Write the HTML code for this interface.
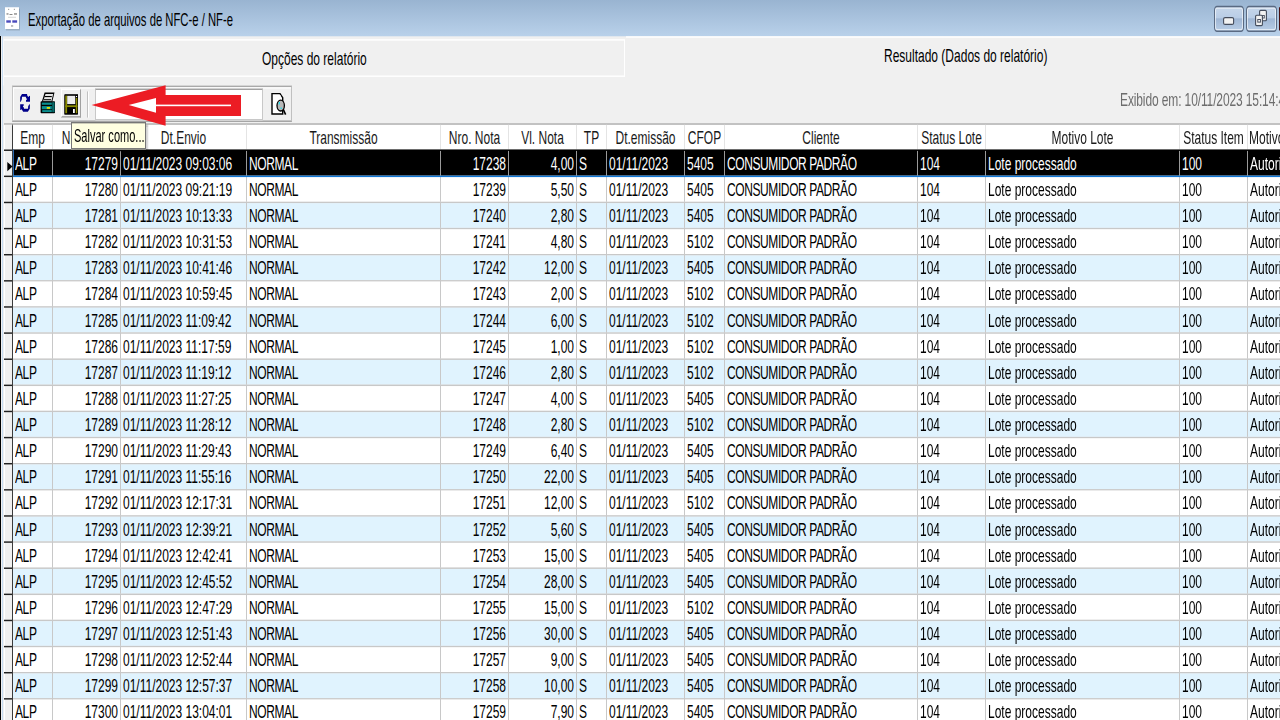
<!DOCTYPE html><html><head><meta charset="utf-8"><style>
html,body{margin:0;padding:0;width:1280px;height:720px;overflow:hidden;background:#f0f0f0}
#root{position:absolute;left:0;top:0;width:1280px;height:496.077px;transform:scaleY(1.451389);transform-origin:0 0;font-family:"Liberation Sans",sans-serif;font-size:12px;color:#000;background:#f0f0f0}
.a{position:absolute}
.t{position:absolute;white-space:pre;line-height:14px;height:14px;transform:scaleY(1.08);transform-origin:0 11.16px}
.u{letter-spacing:-0.4px}
.c{position:absolute;white-space:pre;line-height:14px;height:14px;overflow:hidden;transform:scaleY(1.08);transform-origin:0 11.16px}
</style></head><body><div id="root">

<div class="a" style="left:0;top:0;width:1280px;height:25.08px;background:linear-gradient(#99b4d1,#b9d1ea)"></div>
<div class="a" style="left:5px;top:4.82px;width:14px;height:15.16px;background:#fff;box-shadow:1px 1px 0 rgba(0,0,0,0.15)"></div>
<div class="t" style="left:28px;top:6.75px;font-size:12px;color:#000;transform:scaleX(0.94) scaleY(1.07);transform-origin:0 11.16px">Exportação de arquivos de NFC-e / NF-e</div>
<div class="a" style="left:0;top:24.94px;width:1px;height:600px;background:#000"></div>
<div class="a" style="left:2px;top:24.94px;width:1px;height:600px;background:#c6dcf2"></div>
<div class="a" style="left:3px;top:27.22px;width:1px;height:31.35px;background:#fafafa"></div>
<div class="a" style="left:4px;top:27.22px;width:620px;height:1px;background:#fff"></div>
<div class="a" style="left:624px;top:27.22px;width:1px;height:25.49px;background:#fff"></div>
<div class="a" style="left:4px;top:52.23px;width:621px;height:1px;background:#fff"></div>
<div class="a" style="left:626px;top:25.22px;width:654px;height:1px;background:#fff"></div>
<div class="t" style="left:262px;top:33.56px">Opções do relatório</div>
<div class="t" style="left:884px;top:32.04px">Resultado (Dados do relatório)</div>
<div class="t" style="left:1120px;top:61.87px;color:#6d6d6d;letter-spacing:-0.12px">Exibido em: 10/11/2023 15:14:48</div>
<div class="a" style="left:12px;top:59.25px;width:280px;height:24.46px;border-top:1px solid #a9a9a9;border-left:1px solid #c8c8c8;border-right:1px solid #c0c0c0;border-bottom:1px solid #a0a0a0;box-sizing:border-box;box-shadow:inset 1px 1px 0 #fff"></div>
<div class="a" style="left:61px;top:61.32px;width:20px;height:19.98px;border-top:1px solid #fff;border-left:1px solid #fff;border-right:1px solid #a0a0a0;border-bottom:1px solid #a0a0a0;box-sizing:border-box"></div>
<svg class="a" style="left:64px;top:64.77px" width="14" height="14.47" viewBox="0 0 14 14" preserveAspectRatio="none"><rect x="0.5" y="0.5" width="13" height="13" fill="#000"/><rect x="1.5" y="1.5" width="11" height="11" fill="#8a8a00"/><rect x="3" y="1.5" width="8" height="5.5" fill="#e8e8e8"/><rect x="3" y="8.5" width="8" height="4" fill="#000"/><rect x="8.5" y="9" width="1.5" height="3" fill="#fff"/></svg>
<div class="a" style="left:87px;top:62.70px;width:1px;height:17.91px;background:#c0c0c0;box-shadow:1px 0 0 #fff"></div>
<div class="a" style="left:95px;top:61.32px;width:168px;height:22.05px;background:#fff;border:1px solid #c8c8c8;border-top-color:#a0a0a0;box-sizing:border-box"></div>
<svg class="a" style="left:0;top:0;z-index:3" width="1280" height="496.08"><polygon points="91.60,72.34 165.60,58.77 165.60,65.45 241.00,65.45 241.00,79.92 165.60,79.92 165.60,86.61" fill="#ec1c24"/><polygon points="128.70,72.34 156.00,67.45 156.00,77.72" fill="#fff"/><rect x="156" y="72.07" width="75" height="1.10" fill="#fff"/></svg>
<div class="a" style="left:4px;top:85.00px;width:1276px;height:1px;background:#a8a8a8"></div>
<div class="a" style="left:4px;top:86px;width:8px;height:420px;background:#f0f0f0;box-shadow:inset 1px 0 0 #fff"></div>
<div class="a" style="left:12px;top:86px;width:1px;height:420px;background:#3c3c3c"></div>
<div class="a" style="left:13px;top:86px;width:1267px;height:17px;background:#fff"></div>
<div class="a" style="left:52px;top:86px;width:1px;height:17px;background:#e4e4e4"></div>
<div class="a" style="left:120px;top:86px;width:1px;height:17px;background:#e4e4e4"></div>
<div class="a" style="left:246px;top:86px;width:1px;height:17px;background:#e4e4e4"></div>
<div class="a" style="left:440px;top:86px;width:1px;height:17px;background:#e4e4e4"></div>
<div class="a" style="left:508px;top:86px;width:1px;height:17px;background:#e4e4e4"></div>
<div class="a" style="left:576px;top:86px;width:1px;height:17px;background:#e4e4e4"></div>
<div class="a" style="left:606px;top:86px;width:1px;height:17px;background:#e4e4e4"></div>
<div class="a" style="left:684px;top:86px;width:1px;height:17px;background:#e4e4e4"></div>
<div class="a" style="left:724px;top:86px;width:1px;height:17px;background:#e4e4e4"></div>
<div class="a" style="left:917px;top:86px;width:1px;height:17px;background:#e4e4e4"></div>
<div class="a" style="left:985px;top:86px;width:1px;height:17px;background:#e4e4e4"></div>
<div class="a" style="left:1179px;top:86px;width:1px;height:17px;background:#e4e4e4"></div>
<div class="a" style="left:1247px;top:86px;width:1px;height:17px;background:#e4e4e4"></div>
<div class="c" style="left:13px;top:87.64px;width:39px;text-align:center;color:#1a1a1a">Emp</div>
<div class="c" style="left:53px;top:87.64px;width:67px;text-align:center;color:#1a1a1a">Nro. Lote</div>
<div class="c" style="left:121px;top:87.64px;width:125px;text-align:center;color:#1a1a1a">Dt.Envio</div>
<div class="c" style="left:247px;top:87.64px;width:193px;text-align:center;color:#1a1a1a">Transmissão</div>
<div class="c" style="left:441px;top:87.64px;width:67px;text-align:center;color:#1a1a1a">Nro. Nota</div>
<div class="c" style="left:509px;top:87.64px;width:67px;text-align:center;color:#1a1a1a">Vl. Nota</div>
<div class="c" style="left:577px;top:87.64px;width:29px;text-align:center;color:#1a1a1a">TP</div>
<div class="c" style="left:607px;top:87.64px;width:77px;text-align:center;color:#1a1a1a">Dt.emissão</div>
<div class="c" style="left:685px;top:87.64px;width:39px;text-align:center;color:#1a1a1a">CFOP</div>
<div class="c" style="left:725px;top:87.64px;width:192px;text-align:center;color:#1a1a1a">Cliente</div>
<div class="c" style="left:918px;top:87.64px;width:67px;text-align:center;color:#1a1a1a">Status Lote</div>
<div class="c" style="left:986px;top:87.64px;width:193px;text-align:center;color:#1a1a1a">Motivo Lote</div>
<div class="c" style="left:1180px;top:87.64px;width:67px;text-align:center;color:#1a1a1a">Status Item</div>
<div class="c" style="left:1249px;top:87.64px;width:200px;color:#1a1a1a">Motivo Item</div>
<div class="a" style="left:13px;top:103px;width:1267px;height:1px;background:#c8c8c8"></div>
<div class="a" style="left:13px;top:104px;width:1267px;height:17px;background:#000"></div>
<div class="a" style="left:4px;top:103px;width:8px;height:1px;background:#202020"></div>
<div class="a" style="left:13px;top:103px;width:1267px;height:18px;background:#000"></div>
<div class="a" style="left:13px;top:121px;width:1267px;height:1px;background:#1076d4;z-index:2"></div>
<div class="a" style="left:13px;top:103px;width:1px;height:18px;background:#2a6ab0"></div>
<div class="a" style="left:52px;top:104px;width:1px;height:17px;background:#9a9a9a"></div>
<div class="a" style="left:120px;top:104px;width:1px;height:17px;background:#9a9a9a"></div>
<div class="a" style="left:246px;top:104px;width:1px;height:17px;background:#9a9a9a"></div>
<div class="a" style="left:440px;top:104px;width:1px;height:17px;background:#9a9a9a"></div>
<div class="a" style="left:508px;top:104px;width:1px;height:17px;background:#9a9a9a"></div>
<div class="a" style="left:576px;top:104px;width:1px;height:17px;background:#9a9a9a"></div>
<div class="a" style="left:606px;top:104px;width:1px;height:17px;background:#9a9a9a"></div>
<div class="a" style="left:684px;top:104px;width:1px;height:17px;background:#9a9a9a"></div>
<div class="a" style="left:724px;top:104px;width:1px;height:17px;background:#9a9a9a"></div>
<div class="a" style="left:917px;top:104px;width:1px;height:17px;background:#9a9a9a"></div>
<div class="a" style="left:985px;top:104px;width:1px;height:17px;background:#9a9a9a"></div>
<div class="a" style="left:1179px;top:104px;width:1px;height:17px;background:#9a9a9a"></div>
<div class="a" style="left:1247px;top:104px;width:1px;height:17px;background:#9a9a9a"></div>
<div class="c" style="left:15px;top:105.84px;width:37px;color:#fff;letter-spacing:-0.4px">ALP</div>
<div class="c" style="left:53px;top:105.84px;width:65px;text-align:right;color:#fff">17279</div>
<div class="c" style="left:123px;top:105.84px;width:123px;color:#fff">01/11/2023 09:03:06</div>
<div class="c" style="left:249px;top:105.84px;width:191px;color:#fff;letter-spacing:-0.4px">NORMAL</div>
<div class="c" style="left:441px;top:105.84px;width:65px;text-align:right;color:#fff">17238</div>
<div class="c" style="left:509px;top:105.84px;width:65px;text-align:right;color:#fff">4,00</div>
<div class="c" style="left:579px;top:105.84px;width:27px;color:#fff">S</div>
<div class="c" style="left:609px;top:105.84px;width:75px;color:#fff">01/11/2023</div>
<div class="c" style="left:687px;top:105.84px;width:37px;color:#fff">5405</div>
<div class="c" style="left:727px;top:105.84px;width:190px;color:#fff;letter-spacing:-0.4px">CONSUMIDOR PADRÃO</div>
<div class="c" style="left:920px;top:105.84px;width:65px;color:#fff">104</div>
<div class="c" style="left:988px;top:105.84px;width:191px;color:#fff">Lote processado</div>
<div class="c" style="left:1182px;top:105.84px;width:65px;color:#fff">100</div>
<div class="c" style="left:1250px;top:105.84px;width:150px;color:#fff">Autorizado o uso da NF-e</div>
<div class="a" style="left:13px;top:121px;width:1267px;height:1px;background:#c8c8c8"></div>
<div class="a" style="left:13px;top:122px;width:1267px;height:17px;background:#fff"></div>
<div class="a" style="left:4px;top:121px;width:8px;height:1px;background:#202020"></div>
<div class="a" style="left:52px;top:121px;width:1px;height:18px;background:#c8c8c8"></div>
<div class="a" style="left:120px;top:121px;width:1px;height:18px;background:#c8c8c8"></div>
<div class="a" style="left:246px;top:121px;width:1px;height:18px;background:#c8c8c8"></div>
<div class="a" style="left:440px;top:121px;width:1px;height:18px;background:#c8c8c8"></div>
<div class="a" style="left:508px;top:121px;width:1px;height:18px;background:#c8c8c8"></div>
<div class="a" style="left:576px;top:121px;width:1px;height:18px;background:#c8c8c8"></div>
<div class="a" style="left:606px;top:121px;width:1px;height:18px;background:#c8c8c8"></div>
<div class="a" style="left:684px;top:121px;width:1px;height:18px;background:#c8c8c8"></div>
<div class="a" style="left:724px;top:121px;width:1px;height:18px;background:#c8c8c8"></div>
<div class="a" style="left:917px;top:121px;width:1px;height:18px;background:#c8c8c8"></div>
<div class="a" style="left:985px;top:121px;width:1px;height:18px;background:#c8c8c8"></div>
<div class="a" style="left:1179px;top:121px;width:1px;height:18px;background:#c8c8c8"></div>
<div class="a" style="left:1247px;top:121px;width:1px;height:18px;background:#c8c8c8"></div>
<div class="c" style="left:15px;top:123.84px;width:37px;color:#000;letter-spacing:-0.4px">ALP</div>
<div class="c" style="left:53px;top:123.84px;width:65px;text-align:right;color:#000">17280</div>
<div class="c" style="left:123px;top:123.84px;width:123px;color:#000">01/11/2023 09:21:19</div>
<div class="c" style="left:249px;top:123.84px;width:191px;color:#000;letter-spacing:-0.4px">NORMAL</div>
<div class="c" style="left:441px;top:123.84px;width:65px;text-align:right;color:#000">17239</div>
<div class="c" style="left:509px;top:123.84px;width:65px;text-align:right;color:#000">5,50</div>
<div class="c" style="left:579px;top:123.84px;width:27px;color:#000">S</div>
<div class="c" style="left:609px;top:123.84px;width:75px;color:#000">01/11/2023</div>
<div class="c" style="left:687px;top:123.84px;width:37px;color:#000">5405</div>
<div class="c" style="left:727px;top:123.84px;width:190px;color:#000;letter-spacing:-0.4px">CONSUMIDOR PADRÃO</div>
<div class="c" style="left:920px;top:123.84px;width:65px;color:#000">104</div>
<div class="c" style="left:988px;top:123.84px;width:191px;color:#000">Lote processado</div>
<div class="c" style="left:1182px;top:123.84px;width:65px;color:#000">100</div>
<div class="c" style="left:1250px;top:123.84px;width:150px;color:#000">Autorizado o uso da NF-e</div>
<div class="a" style="left:13px;top:139px;width:1267px;height:1px;background:#c8c8c8"></div>
<div class="a" style="left:13px;top:140px;width:1267px;height:17px;background:#e0f3fe"></div>
<div class="a" style="left:4px;top:139px;width:8px;height:1px;background:#202020"></div>
<div class="a" style="left:52px;top:139px;width:1px;height:18px;background:#c8c8c8"></div>
<div class="a" style="left:120px;top:139px;width:1px;height:18px;background:#c8c8c8"></div>
<div class="a" style="left:246px;top:139px;width:1px;height:18px;background:#c8c8c8"></div>
<div class="a" style="left:440px;top:139px;width:1px;height:18px;background:#c8c8c8"></div>
<div class="a" style="left:508px;top:139px;width:1px;height:18px;background:#c8c8c8"></div>
<div class="a" style="left:576px;top:139px;width:1px;height:18px;background:#c8c8c8"></div>
<div class="a" style="left:606px;top:139px;width:1px;height:18px;background:#c8c8c8"></div>
<div class="a" style="left:684px;top:139px;width:1px;height:18px;background:#c8c8c8"></div>
<div class="a" style="left:724px;top:139px;width:1px;height:18px;background:#c8c8c8"></div>
<div class="a" style="left:917px;top:139px;width:1px;height:18px;background:#c8c8c8"></div>
<div class="a" style="left:985px;top:139px;width:1px;height:18px;background:#c8c8c8"></div>
<div class="a" style="left:1179px;top:139px;width:1px;height:18px;background:#c8c8c8"></div>
<div class="a" style="left:1247px;top:139px;width:1px;height:18px;background:#c8c8c8"></div>
<div class="c" style="left:15px;top:141.84px;width:37px;color:#000;letter-spacing:-0.4px">ALP</div>
<div class="c" style="left:53px;top:141.84px;width:65px;text-align:right;color:#000">17281</div>
<div class="c" style="left:123px;top:141.84px;width:123px;color:#000">01/11/2023 10:13:33</div>
<div class="c" style="left:249px;top:141.84px;width:191px;color:#000;letter-spacing:-0.4px">NORMAL</div>
<div class="c" style="left:441px;top:141.84px;width:65px;text-align:right;color:#000">17240</div>
<div class="c" style="left:509px;top:141.84px;width:65px;text-align:right;color:#000">2,80</div>
<div class="c" style="left:579px;top:141.84px;width:27px;color:#000">S</div>
<div class="c" style="left:609px;top:141.84px;width:75px;color:#000">01/11/2023</div>
<div class="c" style="left:687px;top:141.84px;width:37px;color:#000">5405</div>
<div class="c" style="left:727px;top:141.84px;width:190px;color:#000;letter-spacing:-0.4px">CONSUMIDOR PADRÃO</div>
<div class="c" style="left:920px;top:141.84px;width:65px;color:#000">104</div>
<div class="c" style="left:988px;top:141.84px;width:191px;color:#000">Lote processado</div>
<div class="c" style="left:1182px;top:141.84px;width:65px;color:#000">100</div>
<div class="c" style="left:1250px;top:141.84px;width:150px;color:#000">Autorizado o uso da NF-e</div>
<div class="a" style="left:13px;top:157px;width:1267px;height:1px;background:#c8c8c8"></div>
<div class="a" style="left:13px;top:158px;width:1267px;height:17px;background:#fff"></div>
<div class="a" style="left:4px;top:157px;width:8px;height:1px;background:#202020"></div>
<div class="a" style="left:52px;top:157px;width:1px;height:18px;background:#c8c8c8"></div>
<div class="a" style="left:120px;top:157px;width:1px;height:18px;background:#c8c8c8"></div>
<div class="a" style="left:246px;top:157px;width:1px;height:18px;background:#c8c8c8"></div>
<div class="a" style="left:440px;top:157px;width:1px;height:18px;background:#c8c8c8"></div>
<div class="a" style="left:508px;top:157px;width:1px;height:18px;background:#c8c8c8"></div>
<div class="a" style="left:576px;top:157px;width:1px;height:18px;background:#c8c8c8"></div>
<div class="a" style="left:606px;top:157px;width:1px;height:18px;background:#c8c8c8"></div>
<div class="a" style="left:684px;top:157px;width:1px;height:18px;background:#c8c8c8"></div>
<div class="a" style="left:724px;top:157px;width:1px;height:18px;background:#c8c8c8"></div>
<div class="a" style="left:917px;top:157px;width:1px;height:18px;background:#c8c8c8"></div>
<div class="a" style="left:985px;top:157px;width:1px;height:18px;background:#c8c8c8"></div>
<div class="a" style="left:1179px;top:157px;width:1px;height:18px;background:#c8c8c8"></div>
<div class="a" style="left:1247px;top:157px;width:1px;height:18px;background:#c8c8c8"></div>
<div class="c" style="left:15px;top:159.84px;width:37px;color:#000;letter-spacing:-0.4px">ALP</div>
<div class="c" style="left:53px;top:159.84px;width:65px;text-align:right;color:#000">17282</div>
<div class="c" style="left:123px;top:159.84px;width:123px;color:#000">01/11/2023 10:31:53</div>
<div class="c" style="left:249px;top:159.84px;width:191px;color:#000;letter-spacing:-0.4px">NORMAL</div>
<div class="c" style="left:441px;top:159.84px;width:65px;text-align:right;color:#000">17241</div>
<div class="c" style="left:509px;top:159.84px;width:65px;text-align:right;color:#000">4,80</div>
<div class="c" style="left:579px;top:159.84px;width:27px;color:#000">S</div>
<div class="c" style="left:609px;top:159.84px;width:75px;color:#000">01/11/2023</div>
<div class="c" style="left:687px;top:159.84px;width:37px;color:#000">5102</div>
<div class="c" style="left:727px;top:159.84px;width:190px;color:#000;letter-spacing:-0.4px">CONSUMIDOR PADRÃO</div>
<div class="c" style="left:920px;top:159.84px;width:65px;color:#000">104</div>
<div class="c" style="left:988px;top:159.84px;width:191px;color:#000">Lote processado</div>
<div class="c" style="left:1182px;top:159.84px;width:65px;color:#000">100</div>
<div class="c" style="left:1250px;top:159.84px;width:150px;color:#000">Autorizado o uso da NF-e</div>
<div class="a" style="left:13px;top:175px;width:1267px;height:1px;background:#c8c8c8"></div>
<div class="a" style="left:13px;top:176px;width:1267px;height:17px;background:#e0f3fe"></div>
<div class="a" style="left:4px;top:175px;width:8px;height:1px;background:#202020"></div>
<div class="a" style="left:52px;top:175px;width:1px;height:18px;background:#c8c8c8"></div>
<div class="a" style="left:120px;top:175px;width:1px;height:18px;background:#c8c8c8"></div>
<div class="a" style="left:246px;top:175px;width:1px;height:18px;background:#c8c8c8"></div>
<div class="a" style="left:440px;top:175px;width:1px;height:18px;background:#c8c8c8"></div>
<div class="a" style="left:508px;top:175px;width:1px;height:18px;background:#c8c8c8"></div>
<div class="a" style="left:576px;top:175px;width:1px;height:18px;background:#c8c8c8"></div>
<div class="a" style="left:606px;top:175px;width:1px;height:18px;background:#c8c8c8"></div>
<div class="a" style="left:684px;top:175px;width:1px;height:18px;background:#c8c8c8"></div>
<div class="a" style="left:724px;top:175px;width:1px;height:18px;background:#c8c8c8"></div>
<div class="a" style="left:917px;top:175px;width:1px;height:18px;background:#c8c8c8"></div>
<div class="a" style="left:985px;top:175px;width:1px;height:18px;background:#c8c8c8"></div>
<div class="a" style="left:1179px;top:175px;width:1px;height:18px;background:#c8c8c8"></div>
<div class="a" style="left:1247px;top:175px;width:1px;height:18px;background:#c8c8c8"></div>
<div class="c" style="left:15px;top:177.84px;width:37px;color:#000;letter-spacing:-0.4px">ALP</div>
<div class="c" style="left:53px;top:177.84px;width:65px;text-align:right;color:#000">17283</div>
<div class="c" style="left:123px;top:177.84px;width:123px;color:#000">01/11/2023 10:41:46</div>
<div class="c" style="left:249px;top:177.84px;width:191px;color:#000;letter-spacing:-0.4px">NORMAL</div>
<div class="c" style="left:441px;top:177.84px;width:65px;text-align:right;color:#000">17242</div>
<div class="c" style="left:509px;top:177.84px;width:65px;text-align:right;color:#000">12,00</div>
<div class="c" style="left:579px;top:177.84px;width:27px;color:#000">S</div>
<div class="c" style="left:609px;top:177.84px;width:75px;color:#000">01/11/2023</div>
<div class="c" style="left:687px;top:177.84px;width:37px;color:#000">5405</div>
<div class="c" style="left:727px;top:177.84px;width:190px;color:#000;letter-spacing:-0.4px">CONSUMIDOR PADRÃO</div>
<div class="c" style="left:920px;top:177.84px;width:65px;color:#000">104</div>
<div class="c" style="left:988px;top:177.84px;width:191px;color:#000">Lote processado</div>
<div class="c" style="left:1182px;top:177.84px;width:65px;color:#000">100</div>
<div class="c" style="left:1250px;top:177.84px;width:150px;color:#000">Autorizado o uso da NF-e</div>
<div class="a" style="left:13px;top:193px;width:1267px;height:1px;background:#c8c8c8"></div>
<div class="a" style="left:13px;top:194px;width:1267px;height:17px;background:#fff"></div>
<div class="a" style="left:4px;top:193px;width:8px;height:1px;background:#202020"></div>
<div class="a" style="left:52px;top:193px;width:1px;height:18px;background:#c8c8c8"></div>
<div class="a" style="left:120px;top:193px;width:1px;height:18px;background:#c8c8c8"></div>
<div class="a" style="left:246px;top:193px;width:1px;height:18px;background:#c8c8c8"></div>
<div class="a" style="left:440px;top:193px;width:1px;height:18px;background:#c8c8c8"></div>
<div class="a" style="left:508px;top:193px;width:1px;height:18px;background:#c8c8c8"></div>
<div class="a" style="left:576px;top:193px;width:1px;height:18px;background:#c8c8c8"></div>
<div class="a" style="left:606px;top:193px;width:1px;height:18px;background:#c8c8c8"></div>
<div class="a" style="left:684px;top:193px;width:1px;height:18px;background:#c8c8c8"></div>
<div class="a" style="left:724px;top:193px;width:1px;height:18px;background:#c8c8c8"></div>
<div class="a" style="left:917px;top:193px;width:1px;height:18px;background:#c8c8c8"></div>
<div class="a" style="left:985px;top:193px;width:1px;height:18px;background:#c8c8c8"></div>
<div class="a" style="left:1179px;top:193px;width:1px;height:18px;background:#c8c8c8"></div>
<div class="a" style="left:1247px;top:193px;width:1px;height:18px;background:#c8c8c8"></div>
<div class="c" style="left:15px;top:195.84px;width:37px;color:#000;letter-spacing:-0.4px">ALP</div>
<div class="c" style="left:53px;top:195.84px;width:65px;text-align:right;color:#000">17284</div>
<div class="c" style="left:123px;top:195.84px;width:123px;color:#000">01/11/2023 10:59:45</div>
<div class="c" style="left:249px;top:195.84px;width:191px;color:#000;letter-spacing:-0.4px">NORMAL</div>
<div class="c" style="left:441px;top:195.84px;width:65px;text-align:right;color:#000">17243</div>
<div class="c" style="left:509px;top:195.84px;width:65px;text-align:right;color:#000">2,00</div>
<div class="c" style="left:579px;top:195.84px;width:27px;color:#000">S</div>
<div class="c" style="left:609px;top:195.84px;width:75px;color:#000">01/11/2023</div>
<div class="c" style="left:687px;top:195.84px;width:37px;color:#000">5102</div>
<div class="c" style="left:727px;top:195.84px;width:190px;color:#000;letter-spacing:-0.4px">CONSUMIDOR PADRÃO</div>
<div class="c" style="left:920px;top:195.84px;width:65px;color:#000">104</div>
<div class="c" style="left:988px;top:195.84px;width:191px;color:#000">Lote processado</div>
<div class="c" style="left:1182px;top:195.84px;width:65px;color:#000">100</div>
<div class="c" style="left:1250px;top:195.84px;width:150px;color:#000">Autorizado o uso da NF-e</div>
<div class="a" style="left:13px;top:211px;width:1267px;height:1px;background:#c8c8c8"></div>
<div class="a" style="left:13px;top:212px;width:1267px;height:17px;background:#e0f3fe"></div>
<div class="a" style="left:4px;top:211px;width:8px;height:1px;background:#202020"></div>
<div class="a" style="left:52px;top:211px;width:1px;height:18px;background:#c8c8c8"></div>
<div class="a" style="left:120px;top:211px;width:1px;height:18px;background:#c8c8c8"></div>
<div class="a" style="left:246px;top:211px;width:1px;height:18px;background:#c8c8c8"></div>
<div class="a" style="left:440px;top:211px;width:1px;height:18px;background:#c8c8c8"></div>
<div class="a" style="left:508px;top:211px;width:1px;height:18px;background:#c8c8c8"></div>
<div class="a" style="left:576px;top:211px;width:1px;height:18px;background:#c8c8c8"></div>
<div class="a" style="left:606px;top:211px;width:1px;height:18px;background:#c8c8c8"></div>
<div class="a" style="left:684px;top:211px;width:1px;height:18px;background:#c8c8c8"></div>
<div class="a" style="left:724px;top:211px;width:1px;height:18px;background:#c8c8c8"></div>
<div class="a" style="left:917px;top:211px;width:1px;height:18px;background:#c8c8c8"></div>
<div class="a" style="left:985px;top:211px;width:1px;height:18px;background:#c8c8c8"></div>
<div class="a" style="left:1179px;top:211px;width:1px;height:18px;background:#c8c8c8"></div>
<div class="a" style="left:1247px;top:211px;width:1px;height:18px;background:#c8c8c8"></div>
<div class="c" style="left:15px;top:213.84px;width:37px;color:#000;letter-spacing:-0.4px">ALP</div>
<div class="c" style="left:53px;top:213.84px;width:65px;text-align:right;color:#000">17285</div>
<div class="c" style="left:123px;top:213.84px;width:123px;color:#000">01/11/2023 11:09:42</div>
<div class="c" style="left:249px;top:213.84px;width:191px;color:#000;letter-spacing:-0.4px">NORMAL</div>
<div class="c" style="left:441px;top:213.84px;width:65px;text-align:right;color:#000">17244</div>
<div class="c" style="left:509px;top:213.84px;width:65px;text-align:right;color:#000">6,00</div>
<div class="c" style="left:579px;top:213.84px;width:27px;color:#000">S</div>
<div class="c" style="left:609px;top:213.84px;width:75px;color:#000">01/11/2023</div>
<div class="c" style="left:687px;top:213.84px;width:37px;color:#000">5102</div>
<div class="c" style="left:727px;top:213.84px;width:190px;color:#000;letter-spacing:-0.4px">CONSUMIDOR PADRÃO</div>
<div class="c" style="left:920px;top:213.84px;width:65px;color:#000">104</div>
<div class="c" style="left:988px;top:213.84px;width:191px;color:#000">Lote processado</div>
<div class="c" style="left:1182px;top:213.84px;width:65px;color:#000">100</div>
<div class="c" style="left:1250px;top:213.84px;width:150px;color:#000">Autorizado o uso da NF-e</div>
<div class="a" style="left:13px;top:229px;width:1267px;height:1px;background:#c8c8c8"></div>
<div class="a" style="left:13px;top:230px;width:1267px;height:17px;background:#fff"></div>
<div class="a" style="left:4px;top:229px;width:8px;height:1px;background:#202020"></div>
<div class="a" style="left:52px;top:229px;width:1px;height:18px;background:#c8c8c8"></div>
<div class="a" style="left:120px;top:229px;width:1px;height:18px;background:#c8c8c8"></div>
<div class="a" style="left:246px;top:229px;width:1px;height:18px;background:#c8c8c8"></div>
<div class="a" style="left:440px;top:229px;width:1px;height:18px;background:#c8c8c8"></div>
<div class="a" style="left:508px;top:229px;width:1px;height:18px;background:#c8c8c8"></div>
<div class="a" style="left:576px;top:229px;width:1px;height:18px;background:#c8c8c8"></div>
<div class="a" style="left:606px;top:229px;width:1px;height:18px;background:#c8c8c8"></div>
<div class="a" style="left:684px;top:229px;width:1px;height:18px;background:#c8c8c8"></div>
<div class="a" style="left:724px;top:229px;width:1px;height:18px;background:#c8c8c8"></div>
<div class="a" style="left:917px;top:229px;width:1px;height:18px;background:#c8c8c8"></div>
<div class="a" style="left:985px;top:229px;width:1px;height:18px;background:#c8c8c8"></div>
<div class="a" style="left:1179px;top:229px;width:1px;height:18px;background:#c8c8c8"></div>
<div class="a" style="left:1247px;top:229px;width:1px;height:18px;background:#c8c8c8"></div>
<div class="c" style="left:15px;top:231.84px;width:37px;color:#000;letter-spacing:-0.4px">ALP</div>
<div class="c" style="left:53px;top:231.84px;width:65px;text-align:right;color:#000">17286</div>
<div class="c" style="left:123px;top:231.84px;width:123px;color:#000">01/11/2023 11:17:59</div>
<div class="c" style="left:249px;top:231.84px;width:191px;color:#000;letter-spacing:-0.4px">NORMAL</div>
<div class="c" style="left:441px;top:231.84px;width:65px;text-align:right;color:#000">17245</div>
<div class="c" style="left:509px;top:231.84px;width:65px;text-align:right;color:#000">1,00</div>
<div class="c" style="left:579px;top:231.84px;width:27px;color:#000">S</div>
<div class="c" style="left:609px;top:231.84px;width:75px;color:#000">01/11/2023</div>
<div class="c" style="left:687px;top:231.84px;width:37px;color:#000">5102</div>
<div class="c" style="left:727px;top:231.84px;width:190px;color:#000;letter-spacing:-0.4px">CONSUMIDOR PADRÃO</div>
<div class="c" style="left:920px;top:231.84px;width:65px;color:#000">104</div>
<div class="c" style="left:988px;top:231.84px;width:191px;color:#000">Lote processado</div>
<div class="c" style="left:1182px;top:231.84px;width:65px;color:#000">100</div>
<div class="c" style="left:1250px;top:231.84px;width:150px;color:#000">Autorizado o uso da NF-e</div>
<div class="a" style="left:13px;top:247px;width:1267px;height:1px;background:#c8c8c8"></div>
<div class="a" style="left:13px;top:248px;width:1267px;height:17px;background:#e0f3fe"></div>
<div class="a" style="left:4px;top:247px;width:8px;height:1px;background:#202020"></div>
<div class="a" style="left:52px;top:247px;width:1px;height:18px;background:#c8c8c8"></div>
<div class="a" style="left:120px;top:247px;width:1px;height:18px;background:#c8c8c8"></div>
<div class="a" style="left:246px;top:247px;width:1px;height:18px;background:#c8c8c8"></div>
<div class="a" style="left:440px;top:247px;width:1px;height:18px;background:#c8c8c8"></div>
<div class="a" style="left:508px;top:247px;width:1px;height:18px;background:#c8c8c8"></div>
<div class="a" style="left:576px;top:247px;width:1px;height:18px;background:#c8c8c8"></div>
<div class="a" style="left:606px;top:247px;width:1px;height:18px;background:#c8c8c8"></div>
<div class="a" style="left:684px;top:247px;width:1px;height:18px;background:#c8c8c8"></div>
<div class="a" style="left:724px;top:247px;width:1px;height:18px;background:#c8c8c8"></div>
<div class="a" style="left:917px;top:247px;width:1px;height:18px;background:#c8c8c8"></div>
<div class="a" style="left:985px;top:247px;width:1px;height:18px;background:#c8c8c8"></div>
<div class="a" style="left:1179px;top:247px;width:1px;height:18px;background:#c8c8c8"></div>
<div class="a" style="left:1247px;top:247px;width:1px;height:18px;background:#c8c8c8"></div>
<div class="c" style="left:15px;top:249.84px;width:37px;color:#000;letter-spacing:-0.4px">ALP</div>
<div class="c" style="left:53px;top:249.84px;width:65px;text-align:right;color:#000">17287</div>
<div class="c" style="left:123px;top:249.84px;width:123px;color:#000">01/11/2023 11:19:12</div>
<div class="c" style="left:249px;top:249.84px;width:191px;color:#000;letter-spacing:-0.4px">NORMAL</div>
<div class="c" style="left:441px;top:249.84px;width:65px;text-align:right;color:#000">17246</div>
<div class="c" style="left:509px;top:249.84px;width:65px;text-align:right;color:#000">2,80</div>
<div class="c" style="left:579px;top:249.84px;width:27px;color:#000">S</div>
<div class="c" style="left:609px;top:249.84px;width:75px;color:#000">01/11/2023</div>
<div class="c" style="left:687px;top:249.84px;width:37px;color:#000">5102</div>
<div class="c" style="left:727px;top:249.84px;width:190px;color:#000;letter-spacing:-0.4px">CONSUMIDOR PADRÃO</div>
<div class="c" style="left:920px;top:249.84px;width:65px;color:#000">104</div>
<div class="c" style="left:988px;top:249.84px;width:191px;color:#000">Lote processado</div>
<div class="c" style="left:1182px;top:249.84px;width:65px;color:#000">100</div>
<div class="c" style="left:1250px;top:249.84px;width:150px;color:#000">Autorizado o uso da NF-e</div>
<div class="a" style="left:13px;top:265px;width:1267px;height:1px;background:#c8c8c8"></div>
<div class="a" style="left:13px;top:266px;width:1267px;height:17px;background:#fff"></div>
<div class="a" style="left:4px;top:265px;width:8px;height:1px;background:#202020"></div>
<div class="a" style="left:52px;top:265px;width:1px;height:18px;background:#c8c8c8"></div>
<div class="a" style="left:120px;top:265px;width:1px;height:18px;background:#c8c8c8"></div>
<div class="a" style="left:246px;top:265px;width:1px;height:18px;background:#c8c8c8"></div>
<div class="a" style="left:440px;top:265px;width:1px;height:18px;background:#c8c8c8"></div>
<div class="a" style="left:508px;top:265px;width:1px;height:18px;background:#c8c8c8"></div>
<div class="a" style="left:576px;top:265px;width:1px;height:18px;background:#c8c8c8"></div>
<div class="a" style="left:606px;top:265px;width:1px;height:18px;background:#c8c8c8"></div>
<div class="a" style="left:684px;top:265px;width:1px;height:18px;background:#c8c8c8"></div>
<div class="a" style="left:724px;top:265px;width:1px;height:18px;background:#c8c8c8"></div>
<div class="a" style="left:917px;top:265px;width:1px;height:18px;background:#c8c8c8"></div>
<div class="a" style="left:985px;top:265px;width:1px;height:18px;background:#c8c8c8"></div>
<div class="a" style="left:1179px;top:265px;width:1px;height:18px;background:#c8c8c8"></div>
<div class="a" style="left:1247px;top:265px;width:1px;height:18px;background:#c8c8c8"></div>
<div class="c" style="left:15px;top:267.84px;width:37px;color:#000;letter-spacing:-0.4px">ALP</div>
<div class="c" style="left:53px;top:267.84px;width:65px;text-align:right;color:#000">17288</div>
<div class="c" style="left:123px;top:267.84px;width:123px;color:#000">01/11/2023 11:27:25</div>
<div class="c" style="left:249px;top:267.84px;width:191px;color:#000;letter-spacing:-0.4px">NORMAL</div>
<div class="c" style="left:441px;top:267.84px;width:65px;text-align:right;color:#000">17247</div>
<div class="c" style="left:509px;top:267.84px;width:65px;text-align:right;color:#000">4,00</div>
<div class="c" style="left:579px;top:267.84px;width:27px;color:#000">S</div>
<div class="c" style="left:609px;top:267.84px;width:75px;color:#000">01/11/2023</div>
<div class="c" style="left:687px;top:267.84px;width:37px;color:#000">5405</div>
<div class="c" style="left:727px;top:267.84px;width:190px;color:#000;letter-spacing:-0.4px">CONSUMIDOR PADRÃO</div>
<div class="c" style="left:920px;top:267.84px;width:65px;color:#000">104</div>
<div class="c" style="left:988px;top:267.84px;width:191px;color:#000">Lote processado</div>
<div class="c" style="left:1182px;top:267.84px;width:65px;color:#000">100</div>
<div class="c" style="left:1250px;top:267.84px;width:150px;color:#000">Autorizado o uso da NF-e</div>
<div class="a" style="left:13px;top:283px;width:1267px;height:1px;background:#c8c8c8"></div>
<div class="a" style="left:13px;top:284px;width:1267px;height:17px;background:#e0f3fe"></div>
<div class="a" style="left:4px;top:283px;width:8px;height:1px;background:#202020"></div>
<div class="a" style="left:52px;top:283px;width:1px;height:18px;background:#c8c8c8"></div>
<div class="a" style="left:120px;top:283px;width:1px;height:18px;background:#c8c8c8"></div>
<div class="a" style="left:246px;top:283px;width:1px;height:18px;background:#c8c8c8"></div>
<div class="a" style="left:440px;top:283px;width:1px;height:18px;background:#c8c8c8"></div>
<div class="a" style="left:508px;top:283px;width:1px;height:18px;background:#c8c8c8"></div>
<div class="a" style="left:576px;top:283px;width:1px;height:18px;background:#c8c8c8"></div>
<div class="a" style="left:606px;top:283px;width:1px;height:18px;background:#c8c8c8"></div>
<div class="a" style="left:684px;top:283px;width:1px;height:18px;background:#c8c8c8"></div>
<div class="a" style="left:724px;top:283px;width:1px;height:18px;background:#c8c8c8"></div>
<div class="a" style="left:917px;top:283px;width:1px;height:18px;background:#c8c8c8"></div>
<div class="a" style="left:985px;top:283px;width:1px;height:18px;background:#c8c8c8"></div>
<div class="a" style="left:1179px;top:283px;width:1px;height:18px;background:#c8c8c8"></div>
<div class="a" style="left:1247px;top:283px;width:1px;height:18px;background:#c8c8c8"></div>
<div class="c" style="left:15px;top:285.84px;width:37px;color:#000;letter-spacing:-0.4px">ALP</div>
<div class="c" style="left:53px;top:285.84px;width:65px;text-align:right;color:#000">17289</div>
<div class="c" style="left:123px;top:285.84px;width:123px;color:#000">01/11/2023 11:28:12</div>
<div class="c" style="left:249px;top:285.84px;width:191px;color:#000;letter-spacing:-0.4px">NORMAL</div>
<div class="c" style="left:441px;top:285.84px;width:65px;text-align:right;color:#000">17248</div>
<div class="c" style="left:509px;top:285.84px;width:65px;text-align:right;color:#000">2,80</div>
<div class="c" style="left:579px;top:285.84px;width:27px;color:#000">S</div>
<div class="c" style="left:609px;top:285.84px;width:75px;color:#000">01/11/2023</div>
<div class="c" style="left:687px;top:285.84px;width:37px;color:#000">5102</div>
<div class="c" style="left:727px;top:285.84px;width:190px;color:#000;letter-spacing:-0.4px">CONSUMIDOR PADRÃO</div>
<div class="c" style="left:920px;top:285.84px;width:65px;color:#000">104</div>
<div class="c" style="left:988px;top:285.84px;width:191px;color:#000">Lote processado</div>
<div class="c" style="left:1182px;top:285.84px;width:65px;color:#000">100</div>
<div class="c" style="left:1250px;top:285.84px;width:150px;color:#000">Autorizado o uso da NF-e</div>
<div class="a" style="left:13px;top:301px;width:1267px;height:1px;background:#c8c8c8"></div>
<div class="a" style="left:13px;top:302px;width:1267px;height:17px;background:#fff"></div>
<div class="a" style="left:4px;top:301px;width:8px;height:1px;background:#202020"></div>
<div class="a" style="left:52px;top:301px;width:1px;height:18px;background:#c8c8c8"></div>
<div class="a" style="left:120px;top:301px;width:1px;height:18px;background:#c8c8c8"></div>
<div class="a" style="left:246px;top:301px;width:1px;height:18px;background:#c8c8c8"></div>
<div class="a" style="left:440px;top:301px;width:1px;height:18px;background:#c8c8c8"></div>
<div class="a" style="left:508px;top:301px;width:1px;height:18px;background:#c8c8c8"></div>
<div class="a" style="left:576px;top:301px;width:1px;height:18px;background:#c8c8c8"></div>
<div class="a" style="left:606px;top:301px;width:1px;height:18px;background:#c8c8c8"></div>
<div class="a" style="left:684px;top:301px;width:1px;height:18px;background:#c8c8c8"></div>
<div class="a" style="left:724px;top:301px;width:1px;height:18px;background:#c8c8c8"></div>
<div class="a" style="left:917px;top:301px;width:1px;height:18px;background:#c8c8c8"></div>
<div class="a" style="left:985px;top:301px;width:1px;height:18px;background:#c8c8c8"></div>
<div class="a" style="left:1179px;top:301px;width:1px;height:18px;background:#c8c8c8"></div>
<div class="a" style="left:1247px;top:301px;width:1px;height:18px;background:#c8c8c8"></div>
<div class="c" style="left:15px;top:303.84px;width:37px;color:#000;letter-spacing:-0.4px">ALP</div>
<div class="c" style="left:53px;top:303.84px;width:65px;text-align:right;color:#000">17290</div>
<div class="c" style="left:123px;top:303.84px;width:123px;color:#000">01/11/2023 11:29:43</div>
<div class="c" style="left:249px;top:303.84px;width:191px;color:#000;letter-spacing:-0.4px">NORMAL</div>
<div class="c" style="left:441px;top:303.84px;width:65px;text-align:right;color:#000">17249</div>
<div class="c" style="left:509px;top:303.84px;width:65px;text-align:right;color:#000">6,40</div>
<div class="c" style="left:579px;top:303.84px;width:27px;color:#000">S</div>
<div class="c" style="left:609px;top:303.84px;width:75px;color:#000">01/11/2023</div>
<div class="c" style="left:687px;top:303.84px;width:37px;color:#000">5405</div>
<div class="c" style="left:727px;top:303.84px;width:190px;color:#000;letter-spacing:-0.4px">CONSUMIDOR PADRÃO</div>
<div class="c" style="left:920px;top:303.84px;width:65px;color:#000">104</div>
<div class="c" style="left:988px;top:303.84px;width:191px;color:#000">Lote processado</div>
<div class="c" style="left:1182px;top:303.84px;width:65px;color:#000">100</div>
<div class="c" style="left:1250px;top:303.84px;width:150px;color:#000">Autorizado o uso da NF-e</div>
<div class="a" style="left:13px;top:319px;width:1267px;height:1px;background:#c8c8c8"></div>
<div class="a" style="left:13px;top:320px;width:1267px;height:17px;background:#e0f3fe"></div>
<div class="a" style="left:4px;top:319px;width:8px;height:1px;background:#202020"></div>
<div class="a" style="left:52px;top:319px;width:1px;height:18px;background:#c8c8c8"></div>
<div class="a" style="left:120px;top:319px;width:1px;height:18px;background:#c8c8c8"></div>
<div class="a" style="left:246px;top:319px;width:1px;height:18px;background:#c8c8c8"></div>
<div class="a" style="left:440px;top:319px;width:1px;height:18px;background:#c8c8c8"></div>
<div class="a" style="left:508px;top:319px;width:1px;height:18px;background:#c8c8c8"></div>
<div class="a" style="left:576px;top:319px;width:1px;height:18px;background:#c8c8c8"></div>
<div class="a" style="left:606px;top:319px;width:1px;height:18px;background:#c8c8c8"></div>
<div class="a" style="left:684px;top:319px;width:1px;height:18px;background:#c8c8c8"></div>
<div class="a" style="left:724px;top:319px;width:1px;height:18px;background:#c8c8c8"></div>
<div class="a" style="left:917px;top:319px;width:1px;height:18px;background:#c8c8c8"></div>
<div class="a" style="left:985px;top:319px;width:1px;height:18px;background:#c8c8c8"></div>
<div class="a" style="left:1179px;top:319px;width:1px;height:18px;background:#c8c8c8"></div>
<div class="a" style="left:1247px;top:319px;width:1px;height:18px;background:#c8c8c8"></div>
<div class="c" style="left:15px;top:321.84px;width:37px;color:#000;letter-spacing:-0.4px">ALP</div>
<div class="c" style="left:53px;top:321.84px;width:65px;text-align:right;color:#000">17291</div>
<div class="c" style="left:123px;top:321.84px;width:123px;color:#000">01/11/2023 11:55:16</div>
<div class="c" style="left:249px;top:321.84px;width:191px;color:#000;letter-spacing:-0.4px">NORMAL</div>
<div class="c" style="left:441px;top:321.84px;width:65px;text-align:right;color:#000">17250</div>
<div class="c" style="left:509px;top:321.84px;width:65px;text-align:right;color:#000">22,00</div>
<div class="c" style="left:579px;top:321.84px;width:27px;color:#000">S</div>
<div class="c" style="left:609px;top:321.84px;width:75px;color:#000">01/11/2023</div>
<div class="c" style="left:687px;top:321.84px;width:37px;color:#000">5405</div>
<div class="c" style="left:727px;top:321.84px;width:190px;color:#000;letter-spacing:-0.4px">CONSUMIDOR PADRÃO</div>
<div class="c" style="left:920px;top:321.84px;width:65px;color:#000">104</div>
<div class="c" style="left:988px;top:321.84px;width:191px;color:#000">Lote processado</div>
<div class="c" style="left:1182px;top:321.84px;width:65px;color:#000">100</div>
<div class="c" style="left:1250px;top:321.84px;width:150px;color:#000">Autorizado o uso da NF-e</div>
<div class="a" style="left:13px;top:337px;width:1267px;height:1px;background:#c8c8c8"></div>
<div class="a" style="left:13px;top:338px;width:1267px;height:17px;background:#fff"></div>
<div class="a" style="left:4px;top:337px;width:8px;height:1px;background:#202020"></div>
<div class="a" style="left:52px;top:337px;width:1px;height:18px;background:#c8c8c8"></div>
<div class="a" style="left:120px;top:337px;width:1px;height:18px;background:#c8c8c8"></div>
<div class="a" style="left:246px;top:337px;width:1px;height:18px;background:#c8c8c8"></div>
<div class="a" style="left:440px;top:337px;width:1px;height:18px;background:#c8c8c8"></div>
<div class="a" style="left:508px;top:337px;width:1px;height:18px;background:#c8c8c8"></div>
<div class="a" style="left:576px;top:337px;width:1px;height:18px;background:#c8c8c8"></div>
<div class="a" style="left:606px;top:337px;width:1px;height:18px;background:#c8c8c8"></div>
<div class="a" style="left:684px;top:337px;width:1px;height:18px;background:#c8c8c8"></div>
<div class="a" style="left:724px;top:337px;width:1px;height:18px;background:#c8c8c8"></div>
<div class="a" style="left:917px;top:337px;width:1px;height:18px;background:#c8c8c8"></div>
<div class="a" style="left:985px;top:337px;width:1px;height:18px;background:#c8c8c8"></div>
<div class="a" style="left:1179px;top:337px;width:1px;height:18px;background:#c8c8c8"></div>
<div class="a" style="left:1247px;top:337px;width:1px;height:18px;background:#c8c8c8"></div>
<div class="c" style="left:15px;top:339.84px;width:37px;color:#000;letter-spacing:-0.4px">ALP</div>
<div class="c" style="left:53px;top:339.84px;width:65px;text-align:right;color:#000">17292</div>
<div class="c" style="left:123px;top:339.84px;width:123px;color:#000">01/11/2023 12:17:31</div>
<div class="c" style="left:249px;top:339.84px;width:191px;color:#000;letter-spacing:-0.4px">NORMAL</div>
<div class="c" style="left:441px;top:339.84px;width:65px;text-align:right;color:#000">17251</div>
<div class="c" style="left:509px;top:339.84px;width:65px;text-align:right;color:#000">12,00</div>
<div class="c" style="left:579px;top:339.84px;width:27px;color:#000">S</div>
<div class="c" style="left:609px;top:339.84px;width:75px;color:#000">01/11/2023</div>
<div class="c" style="left:687px;top:339.84px;width:37px;color:#000">5102</div>
<div class="c" style="left:727px;top:339.84px;width:190px;color:#000;letter-spacing:-0.4px">CONSUMIDOR PADRÃO</div>
<div class="c" style="left:920px;top:339.84px;width:65px;color:#000">104</div>
<div class="c" style="left:988px;top:339.84px;width:191px;color:#000">Lote processado</div>
<div class="c" style="left:1182px;top:339.84px;width:65px;color:#000">100</div>
<div class="c" style="left:1250px;top:339.84px;width:150px;color:#000">Autorizado o uso da NF-e</div>
<div class="a" style="left:13px;top:355px;width:1267px;height:1px;background:#c8c8c8"></div>
<div class="a" style="left:13px;top:356px;width:1267px;height:17px;background:#e0f3fe"></div>
<div class="a" style="left:4px;top:355px;width:8px;height:1px;background:#202020"></div>
<div class="a" style="left:52px;top:355px;width:1px;height:18px;background:#c8c8c8"></div>
<div class="a" style="left:120px;top:355px;width:1px;height:18px;background:#c8c8c8"></div>
<div class="a" style="left:246px;top:355px;width:1px;height:18px;background:#c8c8c8"></div>
<div class="a" style="left:440px;top:355px;width:1px;height:18px;background:#c8c8c8"></div>
<div class="a" style="left:508px;top:355px;width:1px;height:18px;background:#c8c8c8"></div>
<div class="a" style="left:576px;top:355px;width:1px;height:18px;background:#c8c8c8"></div>
<div class="a" style="left:606px;top:355px;width:1px;height:18px;background:#c8c8c8"></div>
<div class="a" style="left:684px;top:355px;width:1px;height:18px;background:#c8c8c8"></div>
<div class="a" style="left:724px;top:355px;width:1px;height:18px;background:#c8c8c8"></div>
<div class="a" style="left:917px;top:355px;width:1px;height:18px;background:#c8c8c8"></div>
<div class="a" style="left:985px;top:355px;width:1px;height:18px;background:#c8c8c8"></div>
<div class="a" style="left:1179px;top:355px;width:1px;height:18px;background:#c8c8c8"></div>
<div class="a" style="left:1247px;top:355px;width:1px;height:18px;background:#c8c8c8"></div>
<div class="c" style="left:15px;top:357.84px;width:37px;color:#000;letter-spacing:-0.4px">ALP</div>
<div class="c" style="left:53px;top:357.84px;width:65px;text-align:right;color:#000">17293</div>
<div class="c" style="left:123px;top:357.84px;width:123px;color:#000">01/11/2023 12:39:21</div>
<div class="c" style="left:249px;top:357.84px;width:191px;color:#000;letter-spacing:-0.4px">NORMAL</div>
<div class="c" style="left:441px;top:357.84px;width:65px;text-align:right;color:#000">17252</div>
<div class="c" style="left:509px;top:357.84px;width:65px;text-align:right;color:#000">5,60</div>
<div class="c" style="left:579px;top:357.84px;width:27px;color:#000">S</div>
<div class="c" style="left:609px;top:357.84px;width:75px;color:#000">01/11/2023</div>
<div class="c" style="left:687px;top:357.84px;width:37px;color:#000">5405</div>
<div class="c" style="left:727px;top:357.84px;width:190px;color:#000;letter-spacing:-0.4px">CONSUMIDOR PADRÃO</div>
<div class="c" style="left:920px;top:357.84px;width:65px;color:#000">104</div>
<div class="c" style="left:988px;top:357.84px;width:191px;color:#000">Lote processado</div>
<div class="c" style="left:1182px;top:357.84px;width:65px;color:#000">100</div>
<div class="c" style="left:1250px;top:357.84px;width:150px;color:#000">Autorizado o uso da NF-e</div>
<div class="a" style="left:13px;top:373px;width:1267px;height:1px;background:#c8c8c8"></div>
<div class="a" style="left:13px;top:374px;width:1267px;height:17px;background:#fff"></div>
<div class="a" style="left:4px;top:373px;width:8px;height:1px;background:#202020"></div>
<div class="a" style="left:52px;top:373px;width:1px;height:18px;background:#c8c8c8"></div>
<div class="a" style="left:120px;top:373px;width:1px;height:18px;background:#c8c8c8"></div>
<div class="a" style="left:246px;top:373px;width:1px;height:18px;background:#c8c8c8"></div>
<div class="a" style="left:440px;top:373px;width:1px;height:18px;background:#c8c8c8"></div>
<div class="a" style="left:508px;top:373px;width:1px;height:18px;background:#c8c8c8"></div>
<div class="a" style="left:576px;top:373px;width:1px;height:18px;background:#c8c8c8"></div>
<div class="a" style="left:606px;top:373px;width:1px;height:18px;background:#c8c8c8"></div>
<div class="a" style="left:684px;top:373px;width:1px;height:18px;background:#c8c8c8"></div>
<div class="a" style="left:724px;top:373px;width:1px;height:18px;background:#c8c8c8"></div>
<div class="a" style="left:917px;top:373px;width:1px;height:18px;background:#c8c8c8"></div>
<div class="a" style="left:985px;top:373px;width:1px;height:18px;background:#c8c8c8"></div>
<div class="a" style="left:1179px;top:373px;width:1px;height:18px;background:#c8c8c8"></div>
<div class="a" style="left:1247px;top:373px;width:1px;height:18px;background:#c8c8c8"></div>
<div class="c" style="left:15px;top:375.84px;width:37px;color:#000;letter-spacing:-0.4px">ALP</div>
<div class="c" style="left:53px;top:375.84px;width:65px;text-align:right;color:#000">17294</div>
<div class="c" style="left:123px;top:375.84px;width:123px;color:#000">01/11/2023 12:42:41</div>
<div class="c" style="left:249px;top:375.84px;width:191px;color:#000;letter-spacing:-0.4px">NORMAL</div>
<div class="c" style="left:441px;top:375.84px;width:65px;text-align:right;color:#000">17253</div>
<div class="c" style="left:509px;top:375.84px;width:65px;text-align:right;color:#000">15,00</div>
<div class="c" style="left:579px;top:375.84px;width:27px;color:#000">S</div>
<div class="c" style="left:609px;top:375.84px;width:75px;color:#000">01/11/2023</div>
<div class="c" style="left:687px;top:375.84px;width:37px;color:#000">5405</div>
<div class="c" style="left:727px;top:375.84px;width:190px;color:#000;letter-spacing:-0.4px">CONSUMIDOR PADRÃO</div>
<div class="c" style="left:920px;top:375.84px;width:65px;color:#000">104</div>
<div class="c" style="left:988px;top:375.84px;width:191px;color:#000">Lote processado</div>
<div class="c" style="left:1182px;top:375.84px;width:65px;color:#000">100</div>
<div class="c" style="left:1250px;top:375.84px;width:150px;color:#000">Autorizado o uso da NF-e</div>
<div class="a" style="left:13px;top:391px;width:1267px;height:1px;background:#c8c8c8"></div>
<div class="a" style="left:13px;top:392px;width:1267px;height:17px;background:#e0f3fe"></div>
<div class="a" style="left:4px;top:391px;width:8px;height:1px;background:#202020"></div>
<div class="a" style="left:52px;top:391px;width:1px;height:18px;background:#c8c8c8"></div>
<div class="a" style="left:120px;top:391px;width:1px;height:18px;background:#c8c8c8"></div>
<div class="a" style="left:246px;top:391px;width:1px;height:18px;background:#c8c8c8"></div>
<div class="a" style="left:440px;top:391px;width:1px;height:18px;background:#c8c8c8"></div>
<div class="a" style="left:508px;top:391px;width:1px;height:18px;background:#c8c8c8"></div>
<div class="a" style="left:576px;top:391px;width:1px;height:18px;background:#c8c8c8"></div>
<div class="a" style="left:606px;top:391px;width:1px;height:18px;background:#c8c8c8"></div>
<div class="a" style="left:684px;top:391px;width:1px;height:18px;background:#c8c8c8"></div>
<div class="a" style="left:724px;top:391px;width:1px;height:18px;background:#c8c8c8"></div>
<div class="a" style="left:917px;top:391px;width:1px;height:18px;background:#c8c8c8"></div>
<div class="a" style="left:985px;top:391px;width:1px;height:18px;background:#c8c8c8"></div>
<div class="a" style="left:1179px;top:391px;width:1px;height:18px;background:#c8c8c8"></div>
<div class="a" style="left:1247px;top:391px;width:1px;height:18px;background:#c8c8c8"></div>
<div class="c" style="left:15px;top:393.84px;width:37px;color:#000;letter-spacing:-0.4px">ALP</div>
<div class="c" style="left:53px;top:393.84px;width:65px;text-align:right;color:#000">17295</div>
<div class="c" style="left:123px;top:393.84px;width:123px;color:#000">01/11/2023 12:45:52</div>
<div class="c" style="left:249px;top:393.84px;width:191px;color:#000;letter-spacing:-0.4px">NORMAL</div>
<div class="c" style="left:441px;top:393.84px;width:65px;text-align:right;color:#000">17254</div>
<div class="c" style="left:509px;top:393.84px;width:65px;text-align:right;color:#000">28,00</div>
<div class="c" style="left:579px;top:393.84px;width:27px;color:#000">S</div>
<div class="c" style="left:609px;top:393.84px;width:75px;color:#000">01/11/2023</div>
<div class="c" style="left:687px;top:393.84px;width:37px;color:#000">5405</div>
<div class="c" style="left:727px;top:393.84px;width:190px;color:#000;letter-spacing:-0.4px">CONSUMIDOR PADRÃO</div>
<div class="c" style="left:920px;top:393.84px;width:65px;color:#000">104</div>
<div class="c" style="left:988px;top:393.84px;width:191px;color:#000">Lote processado</div>
<div class="c" style="left:1182px;top:393.84px;width:65px;color:#000">100</div>
<div class="c" style="left:1250px;top:393.84px;width:150px;color:#000">Autorizado o uso da NF-e</div>
<div class="a" style="left:13px;top:409px;width:1267px;height:1px;background:#c8c8c8"></div>
<div class="a" style="left:13px;top:410px;width:1267px;height:17px;background:#fff"></div>
<div class="a" style="left:4px;top:409px;width:8px;height:1px;background:#202020"></div>
<div class="a" style="left:52px;top:409px;width:1px;height:18px;background:#c8c8c8"></div>
<div class="a" style="left:120px;top:409px;width:1px;height:18px;background:#c8c8c8"></div>
<div class="a" style="left:246px;top:409px;width:1px;height:18px;background:#c8c8c8"></div>
<div class="a" style="left:440px;top:409px;width:1px;height:18px;background:#c8c8c8"></div>
<div class="a" style="left:508px;top:409px;width:1px;height:18px;background:#c8c8c8"></div>
<div class="a" style="left:576px;top:409px;width:1px;height:18px;background:#c8c8c8"></div>
<div class="a" style="left:606px;top:409px;width:1px;height:18px;background:#c8c8c8"></div>
<div class="a" style="left:684px;top:409px;width:1px;height:18px;background:#c8c8c8"></div>
<div class="a" style="left:724px;top:409px;width:1px;height:18px;background:#c8c8c8"></div>
<div class="a" style="left:917px;top:409px;width:1px;height:18px;background:#c8c8c8"></div>
<div class="a" style="left:985px;top:409px;width:1px;height:18px;background:#c8c8c8"></div>
<div class="a" style="left:1179px;top:409px;width:1px;height:18px;background:#c8c8c8"></div>
<div class="a" style="left:1247px;top:409px;width:1px;height:18px;background:#c8c8c8"></div>
<div class="c" style="left:15px;top:411.84px;width:37px;color:#000;letter-spacing:-0.4px">ALP</div>
<div class="c" style="left:53px;top:411.84px;width:65px;text-align:right;color:#000">17296</div>
<div class="c" style="left:123px;top:411.84px;width:123px;color:#000">01/11/2023 12:47:29</div>
<div class="c" style="left:249px;top:411.84px;width:191px;color:#000;letter-spacing:-0.4px">NORMAL</div>
<div class="c" style="left:441px;top:411.84px;width:65px;text-align:right;color:#000">17255</div>
<div class="c" style="left:509px;top:411.84px;width:65px;text-align:right;color:#000">15,00</div>
<div class="c" style="left:579px;top:411.84px;width:27px;color:#000">S</div>
<div class="c" style="left:609px;top:411.84px;width:75px;color:#000">01/11/2023</div>
<div class="c" style="left:687px;top:411.84px;width:37px;color:#000">5102</div>
<div class="c" style="left:727px;top:411.84px;width:190px;color:#000;letter-spacing:-0.4px">CONSUMIDOR PADRÃO</div>
<div class="c" style="left:920px;top:411.84px;width:65px;color:#000">104</div>
<div class="c" style="left:988px;top:411.84px;width:191px;color:#000">Lote processado</div>
<div class="c" style="left:1182px;top:411.84px;width:65px;color:#000">100</div>
<div class="c" style="left:1250px;top:411.84px;width:150px;color:#000">Autorizado o uso da NF-e</div>
<div class="a" style="left:13px;top:427px;width:1267px;height:1px;background:#c8c8c8"></div>
<div class="a" style="left:13px;top:428px;width:1267px;height:17px;background:#e0f3fe"></div>
<div class="a" style="left:4px;top:427px;width:8px;height:1px;background:#202020"></div>
<div class="a" style="left:52px;top:427px;width:1px;height:18px;background:#c8c8c8"></div>
<div class="a" style="left:120px;top:427px;width:1px;height:18px;background:#c8c8c8"></div>
<div class="a" style="left:246px;top:427px;width:1px;height:18px;background:#c8c8c8"></div>
<div class="a" style="left:440px;top:427px;width:1px;height:18px;background:#c8c8c8"></div>
<div class="a" style="left:508px;top:427px;width:1px;height:18px;background:#c8c8c8"></div>
<div class="a" style="left:576px;top:427px;width:1px;height:18px;background:#c8c8c8"></div>
<div class="a" style="left:606px;top:427px;width:1px;height:18px;background:#c8c8c8"></div>
<div class="a" style="left:684px;top:427px;width:1px;height:18px;background:#c8c8c8"></div>
<div class="a" style="left:724px;top:427px;width:1px;height:18px;background:#c8c8c8"></div>
<div class="a" style="left:917px;top:427px;width:1px;height:18px;background:#c8c8c8"></div>
<div class="a" style="left:985px;top:427px;width:1px;height:18px;background:#c8c8c8"></div>
<div class="a" style="left:1179px;top:427px;width:1px;height:18px;background:#c8c8c8"></div>
<div class="a" style="left:1247px;top:427px;width:1px;height:18px;background:#c8c8c8"></div>
<div class="c" style="left:15px;top:429.84px;width:37px;color:#000;letter-spacing:-0.4px">ALP</div>
<div class="c" style="left:53px;top:429.84px;width:65px;text-align:right;color:#000">17297</div>
<div class="c" style="left:123px;top:429.84px;width:123px;color:#000">01/11/2023 12:51:43</div>
<div class="c" style="left:249px;top:429.84px;width:191px;color:#000;letter-spacing:-0.4px">NORMAL</div>
<div class="c" style="left:441px;top:429.84px;width:65px;text-align:right;color:#000">17256</div>
<div class="c" style="left:509px;top:429.84px;width:65px;text-align:right;color:#000">30,00</div>
<div class="c" style="left:579px;top:429.84px;width:27px;color:#000">S</div>
<div class="c" style="left:609px;top:429.84px;width:75px;color:#000">01/11/2023</div>
<div class="c" style="left:687px;top:429.84px;width:37px;color:#000">5405</div>
<div class="c" style="left:727px;top:429.84px;width:190px;color:#000;letter-spacing:-0.4px">CONSUMIDOR PADRÃO</div>
<div class="c" style="left:920px;top:429.84px;width:65px;color:#000">104</div>
<div class="c" style="left:988px;top:429.84px;width:191px;color:#000">Lote processado</div>
<div class="c" style="left:1182px;top:429.84px;width:65px;color:#000">100</div>
<div class="c" style="left:1250px;top:429.84px;width:150px;color:#000">Autorizado o uso da NF-e</div>
<div class="a" style="left:13px;top:445px;width:1267px;height:1px;background:#c8c8c8"></div>
<div class="a" style="left:13px;top:446px;width:1267px;height:17px;background:#fff"></div>
<div class="a" style="left:4px;top:445px;width:8px;height:1px;background:#202020"></div>
<div class="a" style="left:52px;top:445px;width:1px;height:18px;background:#c8c8c8"></div>
<div class="a" style="left:120px;top:445px;width:1px;height:18px;background:#c8c8c8"></div>
<div class="a" style="left:246px;top:445px;width:1px;height:18px;background:#c8c8c8"></div>
<div class="a" style="left:440px;top:445px;width:1px;height:18px;background:#c8c8c8"></div>
<div class="a" style="left:508px;top:445px;width:1px;height:18px;background:#c8c8c8"></div>
<div class="a" style="left:576px;top:445px;width:1px;height:18px;background:#c8c8c8"></div>
<div class="a" style="left:606px;top:445px;width:1px;height:18px;background:#c8c8c8"></div>
<div class="a" style="left:684px;top:445px;width:1px;height:18px;background:#c8c8c8"></div>
<div class="a" style="left:724px;top:445px;width:1px;height:18px;background:#c8c8c8"></div>
<div class="a" style="left:917px;top:445px;width:1px;height:18px;background:#c8c8c8"></div>
<div class="a" style="left:985px;top:445px;width:1px;height:18px;background:#c8c8c8"></div>
<div class="a" style="left:1179px;top:445px;width:1px;height:18px;background:#c8c8c8"></div>
<div class="a" style="left:1247px;top:445px;width:1px;height:18px;background:#c8c8c8"></div>
<div class="c" style="left:15px;top:447.84px;width:37px;color:#000;letter-spacing:-0.4px">ALP</div>
<div class="c" style="left:53px;top:447.84px;width:65px;text-align:right;color:#000">17298</div>
<div class="c" style="left:123px;top:447.84px;width:123px;color:#000">01/11/2023 12:52:44</div>
<div class="c" style="left:249px;top:447.84px;width:191px;color:#000;letter-spacing:-0.4px">NORMAL</div>
<div class="c" style="left:441px;top:447.84px;width:65px;text-align:right;color:#000">17257</div>
<div class="c" style="left:509px;top:447.84px;width:65px;text-align:right;color:#000">9,00</div>
<div class="c" style="left:579px;top:447.84px;width:27px;color:#000">S</div>
<div class="c" style="left:609px;top:447.84px;width:75px;color:#000">01/11/2023</div>
<div class="c" style="left:687px;top:447.84px;width:37px;color:#000">5405</div>
<div class="c" style="left:727px;top:447.84px;width:190px;color:#000;letter-spacing:-0.4px">CONSUMIDOR PADRÃO</div>
<div class="c" style="left:920px;top:447.84px;width:65px;color:#000">104</div>
<div class="c" style="left:988px;top:447.84px;width:191px;color:#000">Lote processado</div>
<div class="c" style="left:1182px;top:447.84px;width:65px;color:#000">100</div>
<div class="c" style="left:1250px;top:447.84px;width:150px;color:#000">Autorizado o uso da NF-e</div>
<div class="a" style="left:13px;top:463px;width:1267px;height:1px;background:#c8c8c8"></div>
<div class="a" style="left:13px;top:464px;width:1267px;height:17px;background:#e0f3fe"></div>
<div class="a" style="left:4px;top:463px;width:8px;height:1px;background:#202020"></div>
<div class="a" style="left:52px;top:463px;width:1px;height:18px;background:#c8c8c8"></div>
<div class="a" style="left:120px;top:463px;width:1px;height:18px;background:#c8c8c8"></div>
<div class="a" style="left:246px;top:463px;width:1px;height:18px;background:#c8c8c8"></div>
<div class="a" style="left:440px;top:463px;width:1px;height:18px;background:#c8c8c8"></div>
<div class="a" style="left:508px;top:463px;width:1px;height:18px;background:#c8c8c8"></div>
<div class="a" style="left:576px;top:463px;width:1px;height:18px;background:#c8c8c8"></div>
<div class="a" style="left:606px;top:463px;width:1px;height:18px;background:#c8c8c8"></div>
<div class="a" style="left:684px;top:463px;width:1px;height:18px;background:#c8c8c8"></div>
<div class="a" style="left:724px;top:463px;width:1px;height:18px;background:#c8c8c8"></div>
<div class="a" style="left:917px;top:463px;width:1px;height:18px;background:#c8c8c8"></div>
<div class="a" style="left:985px;top:463px;width:1px;height:18px;background:#c8c8c8"></div>
<div class="a" style="left:1179px;top:463px;width:1px;height:18px;background:#c8c8c8"></div>
<div class="a" style="left:1247px;top:463px;width:1px;height:18px;background:#c8c8c8"></div>
<div class="c" style="left:15px;top:465.84px;width:37px;color:#000;letter-spacing:-0.4px">ALP</div>
<div class="c" style="left:53px;top:465.84px;width:65px;text-align:right;color:#000">17299</div>
<div class="c" style="left:123px;top:465.84px;width:123px;color:#000">01/11/2023 12:57:37</div>
<div class="c" style="left:249px;top:465.84px;width:191px;color:#000;letter-spacing:-0.4px">NORMAL</div>
<div class="c" style="left:441px;top:465.84px;width:65px;text-align:right;color:#000">17258</div>
<div class="c" style="left:509px;top:465.84px;width:65px;text-align:right;color:#000">10,00</div>
<div class="c" style="left:579px;top:465.84px;width:27px;color:#000">S</div>
<div class="c" style="left:609px;top:465.84px;width:75px;color:#000">01/11/2023</div>
<div class="c" style="left:687px;top:465.84px;width:37px;color:#000">5405</div>
<div class="c" style="left:727px;top:465.84px;width:190px;color:#000;letter-spacing:-0.4px">CONSUMIDOR PADRÃO</div>
<div class="c" style="left:920px;top:465.84px;width:65px;color:#000">104</div>
<div class="c" style="left:988px;top:465.84px;width:191px;color:#000">Lote processado</div>
<div class="c" style="left:1182px;top:465.84px;width:65px;color:#000">100</div>
<div class="c" style="left:1250px;top:465.84px;width:150px;color:#000">Autorizado o uso da NF-e</div>
<div class="a" style="left:13px;top:481px;width:1267px;height:1px;background:#c8c8c8"></div>
<div class="a" style="left:13px;top:482px;width:1267px;height:17px;background:#fff"></div>
<div class="a" style="left:4px;top:481px;width:8px;height:1px;background:#202020"></div>
<div class="a" style="left:52px;top:481px;width:1px;height:18px;background:#c8c8c8"></div>
<div class="a" style="left:120px;top:481px;width:1px;height:18px;background:#c8c8c8"></div>
<div class="a" style="left:246px;top:481px;width:1px;height:18px;background:#c8c8c8"></div>
<div class="a" style="left:440px;top:481px;width:1px;height:18px;background:#c8c8c8"></div>
<div class="a" style="left:508px;top:481px;width:1px;height:18px;background:#c8c8c8"></div>
<div class="a" style="left:576px;top:481px;width:1px;height:18px;background:#c8c8c8"></div>
<div class="a" style="left:606px;top:481px;width:1px;height:18px;background:#c8c8c8"></div>
<div class="a" style="left:684px;top:481px;width:1px;height:18px;background:#c8c8c8"></div>
<div class="a" style="left:724px;top:481px;width:1px;height:18px;background:#c8c8c8"></div>
<div class="a" style="left:917px;top:481px;width:1px;height:18px;background:#c8c8c8"></div>
<div class="a" style="left:985px;top:481px;width:1px;height:18px;background:#c8c8c8"></div>
<div class="a" style="left:1179px;top:481px;width:1px;height:18px;background:#c8c8c8"></div>
<div class="a" style="left:1247px;top:481px;width:1px;height:18px;background:#c8c8c8"></div>
<div class="c" style="left:15px;top:483.84px;width:37px;color:#000;letter-spacing:-0.4px">ALP</div>
<div class="c" style="left:53px;top:483.84px;width:65px;text-align:right;color:#000">17300</div>
<div class="c" style="left:123px;top:483.84px;width:123px;color:#000">01/11/2023 13:04:01</div>
<div class="c" style="left:249px;top:483.84px;width:191px;color:#000;letter-spacing:-0.4px">NORMAL</div>
<div class="c" style="left:441px;top:483.84px;width:65px;text-align:right;color:#000">17259</div>
<div class="c" style="left:509px;top:483.84px;width:65px;text-align:right;color:#000">7,90</div>
<div class="c" style="left:579px;top:483.84px;width:27px;color:#000">S</div>
<div class="c" style="left:609px;top:483.84px;width:75px;color:#000">01/11/2023</div>
<div class="c" style="left:687px;top:483.84px;width:37px;color:#000">5405</div>
<div class="c" style="left:727px;top:483.84px;width:190px;color:#000;letter-spacing:-0.4px">CONSUMIDOR PADRÃO</div>
<div class="c" style="left:920px;top:483.84px;width:65px;color:#000">104</div>
<div class="c" style="left:988px;top:483.84px;width:191px;color:#000">Lote processado</div>
<div class="c" style="left:1182px;top:483.84px;width:65px;color:#000">100</div>
<div class="c" style="left:1250px;top:483.84px;width:150px;color:#000">Autorizado o uso da NF-e</div>
<svg class="a" style="left:0;top:0;z-index:4" width="1280" height="496.077" viewBox="0 0 1280 720" preserveAspectRatio="none">
<polygon fill="#00008a" points="20.17,101.83 20.17,97.00 22.00,94.00 27.00,94.00 27.33,95.83 28.33,97.00 29.50,95.83 30.00,96.00 30.00,101.83 26.00,101.83 26.00,100.33 27.00,99.33 26.00,97.67 25.83,96.83 22.00,96.83 21.83,99.33 20.83,101.83"/>
<polygon fill="#00008a" points="20.17,104.17 23.67,104.17 23.83,105.33 22.83,106.50 23.83,107.50 24.00,108.83 28.00,108.83 28.17,106.17 29.33,104.17 29.92,104.50 29.83,108.67 27.83,111.83 23.17,111.83 21.67,109.33 20.67,110.00 20.17,109.83"/>
<polygon fill="#000" points="44.6,92.6 54.5,92.6 52.3,101.8 41.8,101.8"/>
<polygon fill="#e6e6e6" points="45.5,94 53.2,94 51.4,101.2 43.2,101.2"/>
<rect x="44.6" y="96" width="7.2" height="1.1" fill="#000"/><rect x="44" y="99.2" width="7" height="1.1" fill="#000"/>
<rect x="40.6" y="101.2" width="14.4" height="12" rx="0.8" fill="#000"/>
<rect x="41.8" y="102.6" width="10" height="2.2" fill="#0a8f8f"/>
<rect x="41.8" y="106.1" width="10" height="3.2" fill="#0a8f8f"/>
<rect x="46.8" y="107" width="3.2" height="1.8" fill="#e4e400"/>
<rect x="42.2" y="110.1" width="9.6" height="2" fill="#0a8f8f"/>
<rect x="52.2" y="102.2" width="2.4" height="10" fill="#0a8f8f" opacity="0.75"/>
<rect x="64.5" y="94.2" width="13.5" height="20.3" fill="#000"/>
<rect x="65.3" y="95.6" width="1.8" height="17.6" fill="#8a8a00"/>
<rect x="75.8" y="98" width="1.5" height="15.2" fill="#8a8a00"/>
<rect x="65.3" y="105.3" width="12" height="1.8" fill="#8a8a00"/>
<rect x="67.2" y="95.8" width="8" height="8.3" fill="#ececec"/>
<rect x="73" y="109" width="1.8" height="4" fill="#fff"/>
<rect x="76" y="96" width="1.1" height="1.1" fill="#fff"/>
<path d="M272,93.6 H280 L282.7,97.6 V114 H272 Z" fill="#fff" stroke="#000" stroke-width="1.4"/>
<rect x="279.5" y="95" width="1" height="1" fill="#fff"/>
<ellipse cx="280.7" cy="105.6" rx="3.7" ry="5.4" fill="#b8b8b8" stroke="#000" stroke-width="1.3"/>
<path d="M279.5,102 L279,104.5 M281,107.5 L281.3,109" stroke="#10e0f0" stroke-width="1.2"/>
<path d="M283.4,109.6 L285.6,114.6" stroke="#000" stroke-width="1.6"/>
<rect x="8" y="8.8" width="1.2" height="1.2" fill="#aaa"/><rect x="13.8" y="8.8" width="1.2" height="1.2" fill="#aaa"/>
<rect x="6.5" y="13.2" width="2" height="1.5" fill="#666" opacity="0.7"/><rect x="9.5" y="14" width="3" height="1" fill="#555" opacity="0.7"/><rect x="14" y="13.2" width="3" height="1.5" fill="#666" opacity="0.7"/>
<rect x="8" y="16.8" width="8" height="1" fill="#bbb" opacity="0.6"/>
<rect x="6.3" y="20.3" width="4.5" height="2.4" fill="#2a2ab0" opacity="0.85"/><rect x="12.3" y="20.3" width="4.8" height="2.4" fill="#2a2ab0" opacity="0.85"/>
<rect x="11" y="25.2" width="2.2" height="1.5" fill="#888" opacity="0.7"/>
<polygon fill="#000" points="7.3,162 12.5,166.6 7.3,171.3"/>
<rect x="1259.6" y="10.4" width="6.8" height="10.4" rx="1" fill="#f2f2f2" stroke="#444c5c" stroke-width="1.1"/>
<rect x="1262" y="15.5" width="2.3" height="2.5" fill="none" stroke="#444c5c" stroke-width="0.9"/>
<rect x="1255.6" y="15.2" width="6.8" height="10.4" rx="1" fill="#f2f2f2" stroke="#444c5c" stroke-width="1.1"/>
<rect x="1257.8" y="19.5" width="2.6" height="2.6" fill="#fff" stroke="#444c5c" stroke-width="1"/>
<rect x="1223.6" y="17.6" width="10" height="6.8" rx="1.5" fill="#f2f2f2" stroke="#444c5c" stroke-width="1.1"/>
</svg>
<div class="a" style="left:71px;top:84.33px;width:75px;height:18.33px;background:#ffffe1;border:1px solid #767676;box-sizing:border-box;box-shadow:2px 2px 1px rgba(0,0,0,0.25)"></div>
<div class="t" style="left:73.5px;top:86.68px;color:#000;transform:scaleX(0.92) scaleY(1.1);transform-origin:0 11.16px">Salvar como...</div>
<div class="a" style="left:1214px;top:4.13px;width:30px;height:17.57px;border:1px solid #5a6a82;border-radius:3px;box-sizing:border-box;background:linear-gradient(#c6d6ea 0%,#b9cde6 45%,#9fb6d4 50%,#b8cde6 100%);box-shadow:inset 0 0 0 1px rgba(255,255,255,.6)"></div>
<div class="a" style="left:1246px;top:4.13px;width:31px;height:17.57px;border:1px solid #5a6a82;border-radius:3px;box-sizing:border-box;background:linear-gradient(#c6d6ea 0%,#b9cde6 45%,#9fb6d4 50%,#b8cde6 100%);box-shadow:inset 0 0 0 1px rgba(255,255,255,.6)"></div>
<div class="a" style="left:1279px;top:4.82px;width:1px;height:16.54px;background:#4a1010"></div>
</div></body></html>
